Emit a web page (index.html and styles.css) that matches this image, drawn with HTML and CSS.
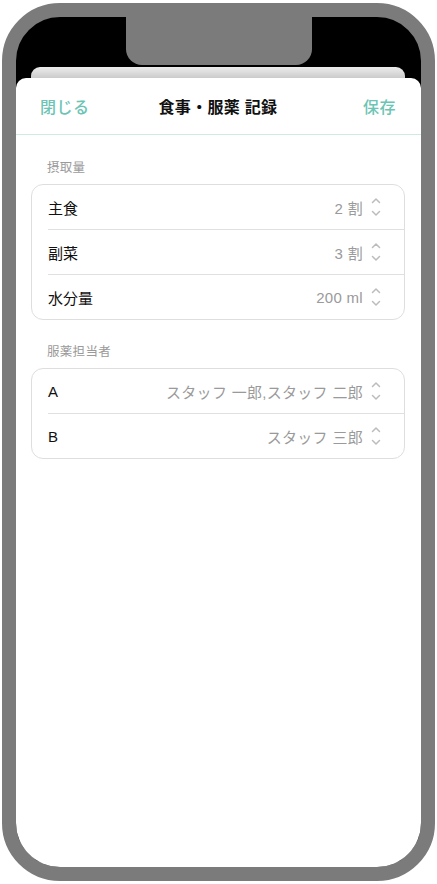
FILE: index.html
```html
<!DOCTYPE html>
<html lang="ja">
<head>
<meta charset="UTF-8">
<meta name="viewport" content="width=device-width, initial-scale=1.0">
<title>食事・服薬 記録</title>
<link rel="stylesheet" href="styles.css">
</head>
<body>
    <div class="phone">
        <div class="notch"></div>
        <div class="back-sheet"></div>
        <div class="sheet">
            <div class="sheet-header">
                <span class="header-btn">閉じる</span>
                <span class="header-title">食事・服薬 記録</span>
                <span class="header-btn save">保存</span>
            </div>

            <div class="section-label">摂取量</div>
            <div class="card">
                <div class="row">
                    <span class="row-label">主食</span>
                    <span class="row-value">2 割</span>
                    <svg class="chevron" viewBox="0 0 10 20"><path d="M1.5 5.5 L5 2 L8.5 5.5 M1.5 14.5 L5 18 L8.5 14.5"/></svg>
                </div>
                <div class="row">
                    <span class="row-label">副菜</span>
                    <span class="row-value">3 割</span>
                    <svg class="chevron" viewBox="0 0 10 20"><path d="M1.5 5.5 L5 2 L8.5 5.5 M1.5 14.5 L5 18 L8.5 14.5"/></svg>
                </div>
                <div class="row">
                    <span class="row-label">水分量</span>
                    <span class="row-value">200 ml</span>
                    <svg class="chevron" viewBox="0 0 10 20"><path d="M1.5 5.5 L5 2 L8.5 5.5 M1.5 14.5 L5 18 L8.5 14.5"/></svg>
                </div>
            </div>

            <div class="section-label section-gap">服薬担当者</div>
            <div class="card">
                <div class="row">
                    <span class="row-label">A</span>
                    <span class="row-value">スタッフ 一郎,スタッフ 二郎</span>
                    <svg class="chevron" viewBox="0 0 10 20"><path d="M1.5 5.5 L5 2 L8.5 5.5 M1.5 14.5 L5 18 L8.5 14.5"/></svg>
                </div>
                <div class="row">
                    <span class="row-label">B</span>
                    <span class="row-value">スタッフ 三郎</span>
                    <svg class="chevron" viewBox="0 0 10 20"><path d="M1.5 5.5 L5 2 L8.5 5.5 M1.5 14.5 L5 18 L8.5 14.5"/></svg>
                </div>
            </div>
        </div>
    </div>
</body>
</html>
```

FILE: styles.css
```css
body {
    margin: 0;
    background-color: #ffffff;
    font-family: "Liberation Sans", "Noto Sans CJK JP", sans-serif;
}

.phone {
    width: 405px;
    height: 850px;
    margin: 3px 0 0 2px;
    border: 14px solid #7b7b7b;
    border-radius: 58px;
    background-color: #000;
    overflow: hidden;
    display: flex;
    flex-direction: column;
}

.notch {
    width: 186px;
    height: 48px;
    margin: 0 auto;
    background-color: #7b7b7b;
    border-radius: 0 0 16px 16px;
    flex-shrink: 0;
}

.back-sheet {
    height: 11px;
    margin: 2px 16px 0 15px;
    border-radius: 9px 9px 0 0;
    background: linear-gradient(#ececec, #cbcbcb);
    flex-shrink: 0;
}

.sheet {
    flex: 1;
    background-color: #fff;
    border-radius: 10px 10px 0 0;
}

.sheet-header {
    height: 56px;
    border-bottom: 1px solid #cfe9e4;
    display: grid;
    grid-template-columns: 1fr auto 1fr;
    align-items: center;
    padding: 0 25px 0 24px;
}

.header-btn {
    color: #6cc4b4;
    font-size: 16px;
    font-weight: 500;
    letter-spacing: 0.5px;
}

.header-btn.save {
    text-align: right;
}

.header-title {
    font-size: 16px;
    font-weight: 700;
    color: #111;
    letter-spacing: 0.3px;
}

.section-label {
    margin: 25px 0 8px 31px;
    font-size: 12.5px;
    line-height: 16px;
    color: #9a9a9a;
    letter-spacing: 0.3px;
}

.section-label.section-gap {
    margin-top: 24px;
}

.card {
    margin: 0 16px 0 15px;
    border: 1px solid #dedede;
    border-radius: 12px;
    padding-left: 16px;
}

.row {
    height: 44px;
    display: flex;
    align-items: center;
    border-bottom: 1px solid #e0e0e0;
}

.row:last-child {
    border-bottom: none;
}

.row-label {
    flex: 1;
    font-size: 15px;
    color: #111;
}

.row-value {
    font-size: 15px;
    color: #9a9a9a;
    letter-spacing: 0.3px;
}

.chevron {
    width: 10px;
    height: 20px;
    margin: 0 23px 0 8px;
    fill: none;
    stroke: #bcbcbc;
    stroke-width: 1.5;
    stroke-linecap: round;
    stroke-linejoin: round;
}
```
